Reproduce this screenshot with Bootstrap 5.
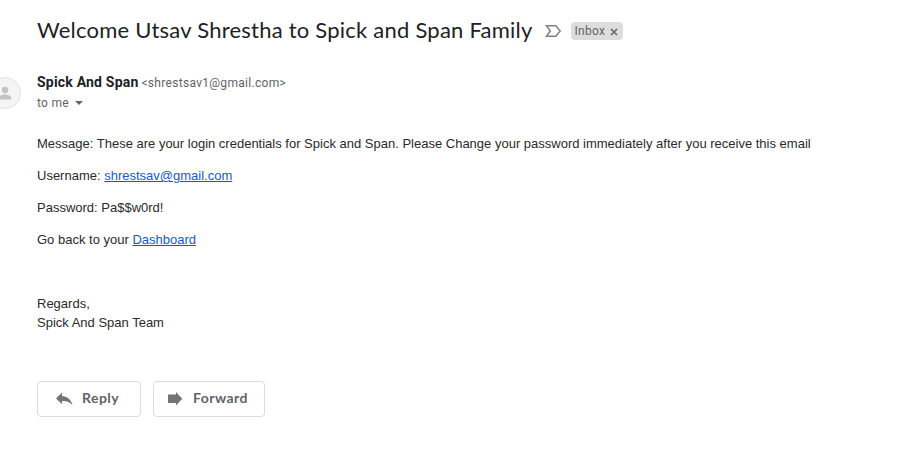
<!DOCTYPE html>
<html lang="en">
<head>
<meta charset="utf-8">
<meta name="viewport" content="width=device-width, initial-scale=1">
<title>Welcome Utsav Shrestha to Spick and Span Family</title>
<link href="https://cdn.jsdelivr.net/npm/bootstrap@5.3.0/dist/css/bootstrap.min.css" rel="stylesheet">
<style>
body{background:#fff;color:#2a2a2a;font-family:"Liberation Sans",Arial,sans-serif;overflow:hidden}
.mail{padding:16px 0 0 37px}
.subject{font:400 22px/28px Lato,sans-serif;letter-spacing:.23px;color:#202124;white-space:nowrap;padding-bottom:2px}
.subject-row{height:30px}
.importance{margin-left:12px}
.tag-inbox{font:12px/18px Roboto,sans-serif;letter-spacing:.3px;background:#ddd;color:#666;border-radius:4px;height:18px;width:52px;padding-left:4px;margin-left:9px}
.tag-inbox svg{margin-left:5px;margin-top:1px}
.sender-row{margin-top:26px;height:62px}
.avatar{width:32px;height:32px;margin:5px 16px 0 -48px}
.sender{line-height:20px;font-family:Roboto,sans-serif;white-space:nowrap}
.sender-name{font-size:14px;font-weight:700;letter-spacing:.2px;color:#202124}
.sender-mail,.recipient{font-size:12px;letter-spacing:.3px;color:#5f6368}
.sender-mail{margin-left:-1px}
.recipient svg{margin-left:6px}
.message{font-size:13px;line-height:19px}
.message p{margin:0 0 13px;white-space:nowrap}
.message a{color:#1558d6}
.reply-bar{gap:12px;margin-top:49px}
.action{height:36px;border:1px solid #dadce0;border-radius:4px;color:#5f6368;font:700 14px/20px Lato,sans-serif;letter-spacing:.45px;padding:0 0 2px 18px}
.action:nth-child(2){padding-left:14px}
.action svg{margin-top:2px}
.action-reply{width:104px;gap:9px}
.action-forward{width:112px;gap:10px}
</style>
</head>
<body>
<main class="mail">
  <header class="subject-row d-flex align-items-center">
    <h1 class="subject m-0">Welcome Utsav Shrestha to Spick and Span Family</h1>
    <svg class="importance" width="17" height="14" viewBox="0 0 17 14" fill="none" stroke="#808080" stroke-width="1.5"><path d="M1.5 1.8H10.8L15.2 7L10.8 12.2H1.5L5.3 7Z"/></svg>
    <span class="tag-inbox d-flex align-items-center"><span>Inbox</span>
      <svg width="8" height="8" viewBox="0 0 8 8" stroke="#666" stroke-width="1.6"><path d="M1 1L7 7M7 1L1 7"/></svg></span>
  </header>
  <section class="sender-row d-flex">
    <svg class="avatar flex-shrink-0" viewBox="0 0 32 32"><circle cx="16" cy="16" r="15.5" fill="#f5f5f5" stroke="#e0e0e0"/><circle cx="16" cy="13" r="3.2" fill="#c4c4c4"/><path d="M9.8 22.5V21C9.8 18.5 13.5 17.6 16 17.6S22.2 18.5 22.2 21V22.5Z" fill="#c4c4c4"/></svg>
    <div class="sender">
      <div><span class="sender-name">Spick And Span</span> <span class="sender-mail">&lt;shrestsav1@gmail.com&gt;</span></div>
      <div class="recipient d-flex align-items-center">to me <svg width="8" height="4" viewBox="0 0 8 4"><path d="M0 0H8L4 4Z" fill="#666"/></svg></div>
    </div>
  </section>
  <article class="message">
    <p>Message: These are your login credentials for Spick and Span. Please Change your password immediately after you receive this email</p>
    <p>Username: <a href="#">shrestsav@gmail.com</a></p>
    <p>Password: Pa$$w0rd!</p>
    <p>Go back to your <a href="#">Dashboard</a></p>
    <p>&nbsp;</p>
    <p>Regards,<br>Spick And Span Team</p>
  </article>
  <footer class="reply-bar d-flex">
    <button class="btn action action-reply d-flex align-items-center"><svg width="17" height="14" viewBox="0 0 17 14"><path d="M6 .5L0 6.5L6 12.3V9C10.5 8.8 13.8 10 16.5 13.3C15.5 8.5 12.5 4.8 6 4Z" fill="#757575"/></svg><span>Reply</span></button>
    <button class="btn action action-forward d-flex align-items-center"><svg width="15" height="14" viewBox="0 0 15 14"><path d="M0 2.5H8V0L14.3 6.7L8 13.4V11H0Z" fill="#757575"/></svg><span>Forward</span></button>
  </footer>
</main>
<script src="https://cdn.jsdelivr.net/npm/bootstrap@5.3.0/dist/js/bootstrap.bundle.min.js"></script>
</body>
</html>
